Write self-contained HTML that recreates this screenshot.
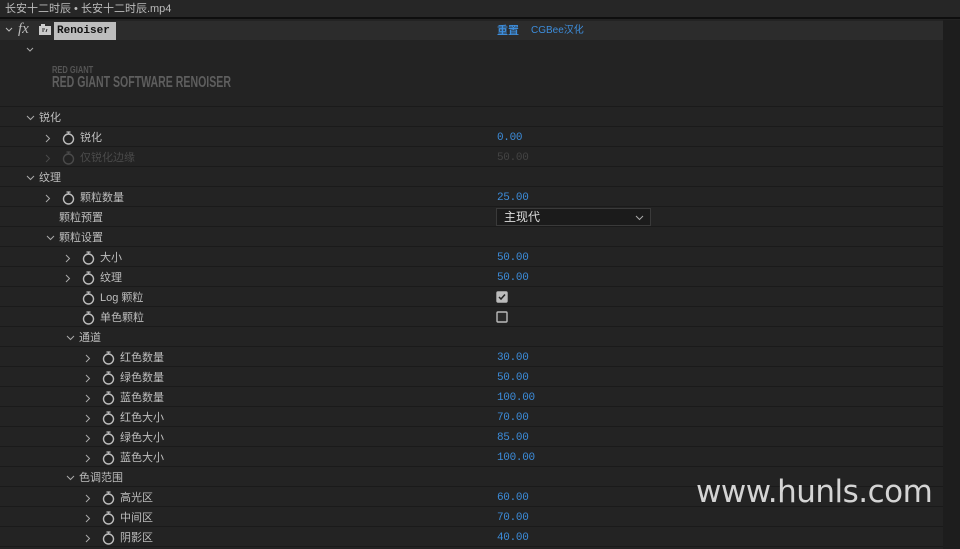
<!DOCTYPE html>
<html><head><meta charset="utf-8"><style>
*{margin:0;padding:0;box-sizing:border-box}
body{width:960px;height:549px;background:#232323;overflow:hidden;position:relative;font-family:"Liberation Sans","Noto Sans CJK SC",sans-serif;font-size:11px;color:#bdbdbd}
.top{position:absolute;left:0;top:0;width:960px;height:19px;background:#262626;border-bottom:2px solid #0e0e0e;font-size:11px;line-height:19px;padding-left:5px;color:#bbb}
.strip{position:absolute;left:943px;top:20px;width:17px;height:529px;background:#1d1d1d}
.hdr{position:absolute;left:0;top:21px;width:943px;height:19px;background:#2c2c2c}
.r{position:absolute;left:0;width:943px;height:20px;border-bottom:1px solid #1a1a1a}
.t{position:absolute;top:4px;font-size:11px;line-height:14px;white-space:nowrap}
.v{position:absolute;left:497px;top:4px;color:#3d8ddb;font-family:"Liberation Mono",monospace;font-size:11px;line-height:14px;letter-spacing:-.3px}
svg{position:absolute}
</style></head><body>
<div class="top">长安十二时辰 • 长安十二时辰.mp4</div>
<div class="strip"></div>
<div class="hdr">
<svg style="left:5px;top:6px" width="8" height="6"><path d="M1 1l3 3 3-3" stroke="#bbb" fill="none"/></svg>
<div class="t" style="left:18px;top:1px;font-style:italic;font-family:'Liberation Serif',serif;font-size:15px;color:#bbb">fx</div>
<svg style="left:39px;top:3px" width="12" height="11"><rect x="0" y="2" width="12" height="9" fill="#ccc"/><rect x="2" y="0" width="4" height="3" fill="#ccc"/><path d="M3 5h3M3 7h2M8 5l-1 3" stroke="#2c2c2c"/></svg>
<div style="position:absolute;left:54px;top:1px;width:62px;height:18px;background:#bdbdbd;color:#111;font-family:'Liberation Mono',monospace;font-weight:bold;font-size:11px;line-height:19px;padding-left:3px">Renoiser</div>
<div class="t" style="left:497px;top:3px;color:#3d8ddb;font-weight:bold">重置</div>
<div class="t" style="left:531px;top:3px;color:#3d8ddb;font-size:10px">CGBee汉化</div>
</div>
<div class="r" style="top:40px;height:67px">
<svg style="left:26px;top:7px" width="8" height="6"><path d="M1 1l3 3 3-3" stroke="#aaa" fill="none"/></svg>
<div class="t" style="left:52px;top:24px;font-size:10px;font-weight:bold;color:#555;transform:scaleX(.75);transform-origin:left">RED GIANT</div>
<div class="t" style="left:52px;top:36px;font-size:16px;font-weight:bold;color:#5e5e5e;transform:scaleX(.66);transform-origin:left">RED GIANT SOFTWARE RENOISER</div>
</div>
<div id="rows"></div>
<div style="position:absolute;left:696px;top:474px;font-size:31px;color:#d4d4d4;font-family:'DejaVu Sans',sans-serif;letter-spacing:-.5px">www.hunls.com</div>
<script>
var rows=[
['g',29,'锐化'],
['p',47,'锐化','0.00'],
['pd',47,'仅锐化边缘','50.00'],
['g',29,'纹理'],
['p',47,'颗粒数量','25.00'],
['n',59,'颗粒预置','dd'],
['g',49,'颗粒设置'],
['p',67,'大小','50.00'],
['p',67,'纹理','50.00'],
['c',67,'Log 颗粒','on'],
['c',67,'单色颗粒','off'],
['g',69,'通道'],
['p',87,'红色数量','30.00'],
['p',87,'绿色数量','50.00'],
['p',87,'蓝色数量','100.00'],
['p',87,'红色大小','70.00'],
['p',87,'绿色大小','85.00'],
['p',87,'蓝色大小','100.00'],
['g',69,'色调范围'],
['p',87,'高光区','60.00'],
['p',87,'中间区','70.00'],
['p',87,'阴影区','40.00']];
var h='';
rows.forEach(function(r,i){
var y=107+i*20,k=r[0],x=r[1],c=k=='pd'?'#4a4a4a':'#bdbdbd';
h+='<div class="r" style="top:'+y+'px">';
if(k=='g'){h+='<svg style="left:'+(x-3)+'px;top:8px" width="9" height="6"><path d="M1 1l3.5 3.5 3.5-3.5" stroke="#aaa" fill="none"/></svg><div class="t" style="left:'+(x+10)+'px">'+r[2]+'</div>';}
else if(k=='n'){h+='<div class="t" style="left:'+x+'px">'+r[2]+'</div><div style="position:absolute;left:496px;top:1px;width:155px;height:18px;background:#1b1b1b;border:1px solid #3a3a3a;color:#ddd;font-size:12px;line-height:17px;padding-left:7px">主现代<svg style="right:6px;top:6px" width="9" height="6"><path d="M1 1l3.5 3.5 3.5-3.5" stroke="#aaa" fill="none"/></svg></div>';}
else{
 if(k!='c')h+='<svg style="left:'+(x-2)+'px;top:7px" width="6" height="9"><path d="M1 1l3.5 3.5-3.5 3.5" stroke="'+(k=='pd'?'#4a4a4a':'#aaa')+'" fill="none"/></svg>';
 h+='<svg style="left:'+(x+15)+'px;top:3px" width="13" height="15"><circle cx="6.5" cy="9" r="5" stroke="'+c+'" stroke-width="1.4" fill="none"/><path d="M4.5 2h4M6.5 2v2" stroke="'+c+'" stroke-width="1.3"/></svg>';
 h+='<div class="t" style="left:'+(x+33)+'px;color:'+c+'">'+r[2]+'</div>';
 if(k=='c'){h+='<svg style="left:496px;top:4px" width="13" height="13"><rect x="1" y="1" width="10" height="10" rx="1" fill="'+(r[3]=='on'?'#bbb':'#2a2a2a')+'" stroke="#bbb" stroke-width="1.4"/>'+(r[3]=='on'?'<path d="M3 6l2 2 4-4.5" stroke="#222" stroke-width="1.5" fill="none"/>':'')+'</svg>';}
 else h+='<div class="v" style="'+(k=='pd'?'color:#444':'')+'">'+r[3]+'</div>';
}
h+='</div>';});
document.getElementById('rows').innerHTML=h;
</script>
</body></html>
